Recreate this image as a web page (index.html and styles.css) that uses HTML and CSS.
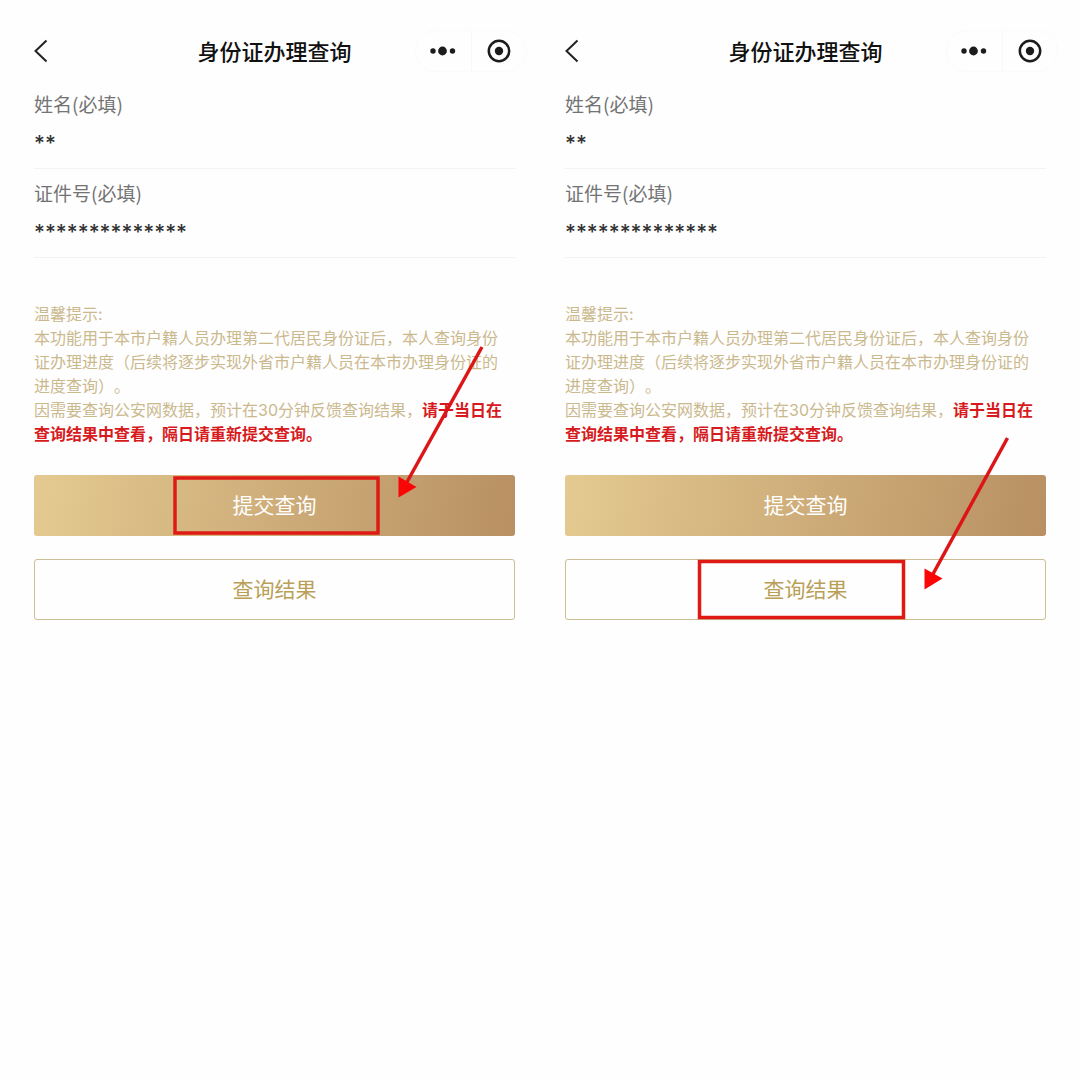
FILE: index.html
```
<!DOCTYPE html>
<html lang="zh-CN">
<head>
    <meta charset="UTF-8">
    <meta name="viewport" content="width=device-width, initial-scale=1.0">
    <title>身份证办理查询</title>
    <link rel="stylesheet" href="styles.css">
</head>
<body>
    <main class="steps">
        <section class="screen">
            <header class="navbar">
                <button type="button" class="back" aria-label="返回">
                    <svg width="16" height="24" viewBox="0 0 16 24"><path d="M12.500 1.500 1.500 12l11 10.500"/></svg>
                </button>
                <h1>身份证办理查询</h1>
                <div class="capsule">
                    <button type="button" aria-label="更多">
                        <svg width="28" height="10" viewBox="0 0 28 10"><circle cx="4" cy="5" r="2.7"/><circle cx="13.5" cy="5" r="4.4"/><circle cx="23.5" cy="5" r="2.7"/></svg>
                    </button>
                    <button type="button" aria-label="关闭">
                        <svg width="24" height="24" viewBox="0 0 24 24"><circle class="ring" cx="12" cy="12" r="10.2"/><circle cx="12" cy="12" r="4.2"/></svg>
                    </button>
                </div>
            </header>
            <form>
                <div class="field">
                    <label for="name1">姓名(必填)</label>
                    <input type="text" id="name1" value="**">
                </div>
                <div class="field">
                    <label for="idno1">证件号(必填)</label>
                    <input type="text" id="idno1" value="**************">
                </div>
                <div class="notice">
                    <p>温馨提示:</p>
                    <p>本功能用于本市户籍人员办理第二代居民身份证后，本人查询身份证办理进度（后续将逐步实现外省市户籍人员在本市办理身份证的进度查询）。</p>
                    <p>因需要查询公安网数据，预计在30分钟反馈查询结果，<strong>请于当日在查询结果中查看，隔日请重新提交查询。</strong></p>
                </div>
                <div class="actions">
                    <button type="button" class="btn btn-submit">提交查询</button>
                    <button type="button" class="btn btn-result">查询结果</button>
                    <svg class="mark mark-submit" width="314" height="194" viewBox="0 0 314 194">
                        <rect x="3" y="134" width="203" height="55"/>
                        <path class="shaft" d="M310 3 235 138"/>
                        <path class="head" d="M226.5 132.500 244.500 143 226.500 153.500z"/>
                    </svg>
                </div>
            </form>
        </section>

        <section class="screen">
            <header class="navbar">
                <button type="button" class="back" aria-label="返回">
                    <svg width="16" height="24" viewBox="0 0 16 24"><path d="M12.500 1.500 1.500 12l11 10.500"/></svg>
                </button>
                <h1>身份证办理查询</h1>
                <div class="capsule">
                    <button type="button" aria-label="更多">
                        <svg width="28" height="10" viewBox="0 0 28 10"><circle cx="4" cy="5" r="2.7"/><circle cx="13.5" cy="5" r="4.4"/><circle cx="23.5" cy="5" r="2.7"/></svg>
                    </button>
                    <button type="button" aria-label="关闭">
                        <svg width="24" height="24" viewBox="0 0 24 24"><circle class="ring" cx="12" cy="12" r="10.2"/><circle cx="12" cy="12" r="4.2"/></svg>
                    </button>
                </div>
            </header>
            <form>
                <div class="field">
                    <label for="name2">姓名(必填)</label>
                    <input type="text" id="name2" value="**">
                </div>
                <div class="field">
                    <label for="idno2">证件号(必填)</label>
                    <input type="text" id="idno2" value="**************">
                </div>
                <div class="notice">
                    <p>温馨提示:</p>
                    <p>本功能用于本市户籍人员办理第二代居民身份证后，本人查询身份证办理进度（后续将逐步实现外省市户籍人员在本市办理身份证的进度查询）。</p>
                    <p>因需要查询公安网数据，预计在30分钟反馈查询结果，<strong>请于当日在查询结果中查看，隔日请重新提交查询。</strong></p>
                </div>
                <div class="actions">
                    <button type="button" class="btn btn-submit">提交查询</button>
                    <button type="button" class="btn btn-result">查询结果</button>
                    <svg class="mark mark-result" width="314" height="186" viewBox="0 0 314 186">
                        <rect x="2.500" y="125.500" width="204" height="56"/>
                        <path class="shaft" d="M310.500 2 236 138"/>
                        <path class="head" d="M227.500 132.500 245.500 142.500 227.500 153.500z"/>
                    </svg>
                </div>
            </form>
        </section>
    </main>
</body>
</html>
```
FILE: styles.css
```
* {
    box-sizing: border-box;
}
body {
    margin: 0;
    background: #fefefe;
    font-family: "Noto Sans CJK SC", sans-serif;
    text-spacing-trim: space-all;
}
h1, p {
    margin: 0;
}
button {
    padding: 0;
    border: none;
    background: none;
    font-family: inherit;
    cursor: pointer;
}
.steps {
    display: grid;
    grid-template-columns: 1fr 1fr;
    gap: 50px;
    padding: 22px 34px;
}

/* top bar */
.navbar {
    display: grid;
    grid-template-columns: 1fr auto 1fr;
    align-items: center;
    height: 58px;
    margin: 0 -12px;
}
.navbar h1 {
    padding-bottom: 2px;
    font-size: 22px;
    line-height: 32px;
    font-weight: 500;
    color: #111;
}
.navbar svg {
    display: block;
}
.back {
    justify-self: start;
    padding-left: 12px;
}
.back path {
    fill: none;
    stroke: #222;
    stroke-width: 2;
}
.capsule {
    justify-self: end;
    display: flex;
    width: 112px;
    height: 42px;
    border: 1px solid #fbfbfb;
    border-radius: 21px;
}
.capsule button {
    flex: 1;
    display: flex;
    align-items: center;
    justify-content: center;
}
.capsule button + button {
    border-left: 1px solid #f8f8f8;
}
.capsule circle {
    fill: #1c1c1c;
}
.capsule .ring {
    fill: none;
    stroke: #1c1c1c;
    stroke-width: 2.5;
}

/* form */
.field {
    display: flex;
    flex-direction: column;
    gap: 8px;
    padding: 12px 0 6px;
    border-bottom: 1px solid #f3f3f3;
}
.field label {
    font-size: 19px;
    line-height: 24px;
    color: #737373;
}
.field input {
    width: 100%;
    height: 38px;
    padding: 0;
    border: none;
    outline: none;
    background: none;
    font-family: Inter, sans-serif;
    font-size: 21px;
    font-weight: 500;
    color: #333;
}
.notice {
    margin-top: 44px;
    padding-right: 4px;
    font-family: Inter, "Noto Sans CJK SC", sans-serif;
    font-size: 16px;
    line-height: 24px;
    color: #cbb98e;
}
.notice strong {
    font-weight: 700;
    color: #d61a20;
}

/* buttons */
.actions {
    position: relative;
    display: flex;
    flex-direction: column;
    gap: 23px;
    margin-top: 29px;
}
.btn {
    height: 61px;
    padding-bottom: 3px;
    border-radius: 3px;
    font-size: 21px;
}
.btn-submit {
    background: linear-gradient(100deg, #e4ca90, #b89063);
    color: #fff;
}
.btn-result {
    border: 1px solid #cdbf93;
    color: #b99f58;
}

/* red frame and arrow over the buttons */
.mark {
    position: absolute;
    pointer-events: none;
}
.mark-submit {
    top: -131px;
    left: calc(50% - 103px);
}
.mark-result {
    top: -39px;
    left: calc(50% - 109px);
}
.mark rect {
    fill: none;
    stroke: #df1a14;
    stroke-width: 3.5;
}
.shaft {
    fill: none;
    stroke: #dc1517;
    stroke-width: 3.5;
}
.head {
    fill: #fa0606;
}
```
